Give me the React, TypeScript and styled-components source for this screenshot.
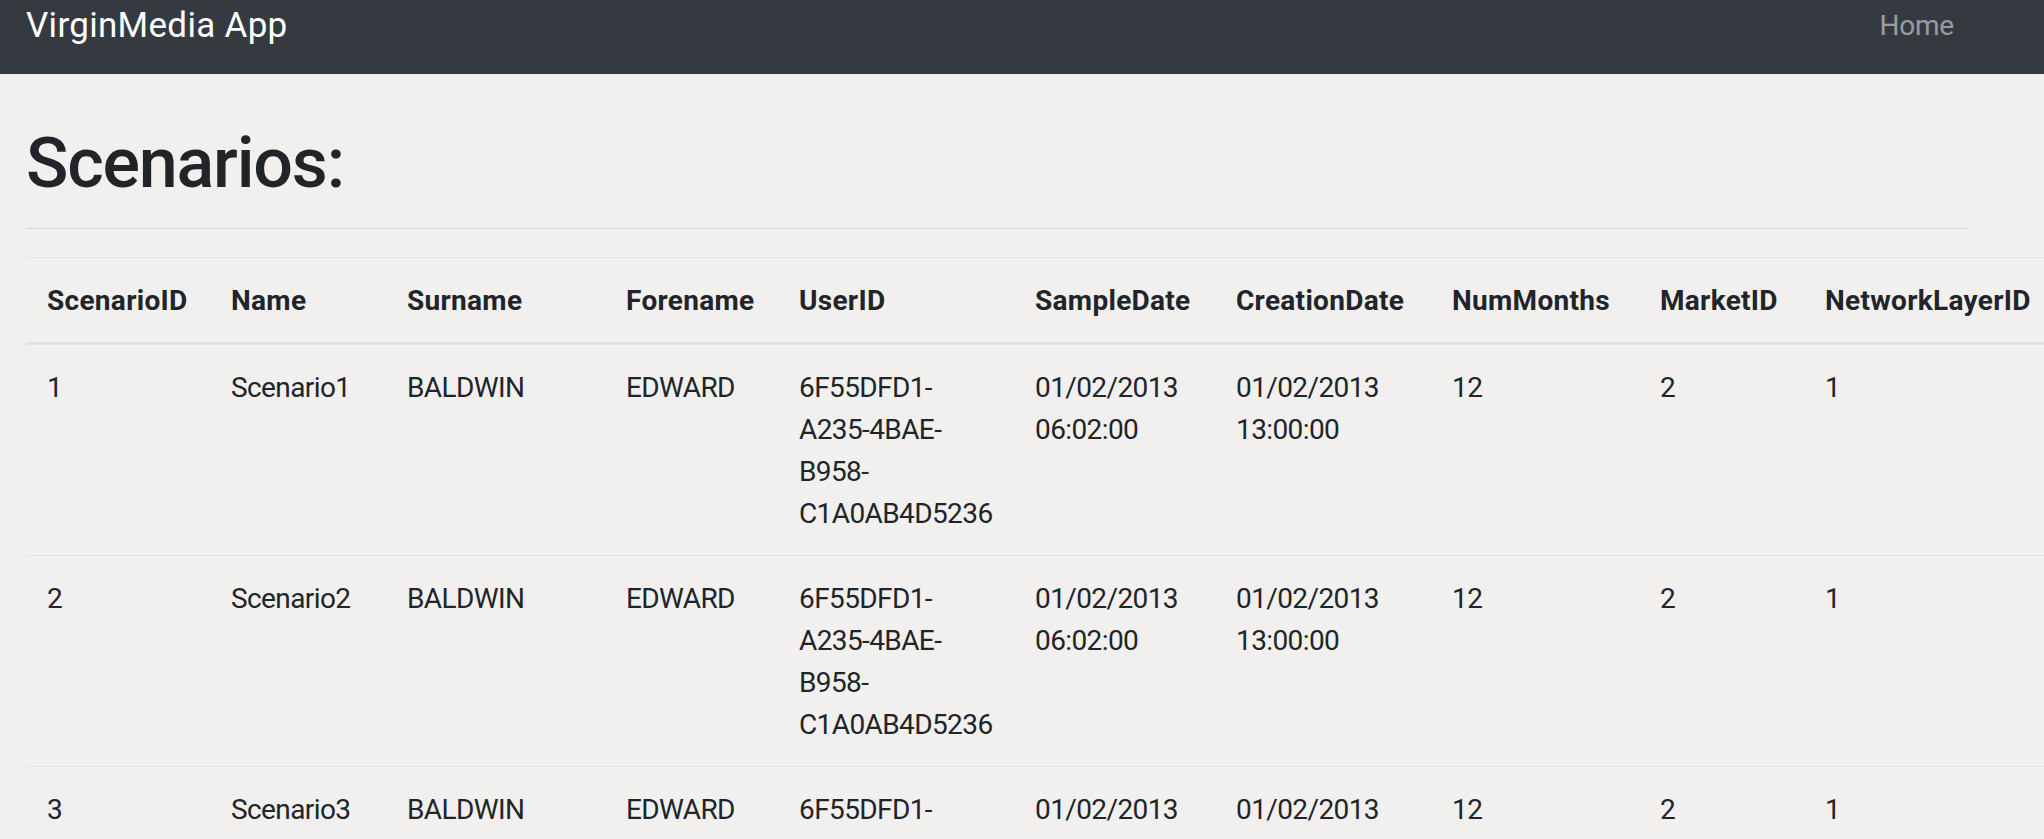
import React from "react";
import styled, { createGlobalStyle } from "styled-components";

const GlobalStyle = createGlobalStyle`
  html, body {
    margin: 0;
    padding: 0;
    background: #f1f0ee;
  }
  body {
    font-family: "Roboto", "Liberation Sans", sans-serif;
    color: #212529;
  }
  * { box-sizing: border-box; }
`;

const Page = styled.div`
  width: 2044px;
  min-height: 839px;
  overflow: hidden;
  background: #f1f0ee;
`;

const NavBar = styled.nav`
  height: 74px;
  background: #343a40;
  display: flex;
  align-items: flex-start;
  justify-content: space-between;
  padding: 0 76px 0 26px;
`;

const Brand = styled.a`
  font-size: 35px;
  line-height: 52px;
  color: #ffffff;
  text-decoration: none;
  letter-spacing: 0.3px;
`;

const NavLink = styled.a`
  margin-top: 5px;
  padding: 0 14px;
  font-size: 28px;
  line-height: 42px;
  color: rgba(255, 255, 255, 0.5);
  text-decoration: none;
  letter-spacing: -0.2px;
`;

const Container = styled.main`
  width: 1994px;
  padding: 47px 26px 0;
`;

const Title = styled.h1`
  margin: 0;
  font-size: 70px;
  line-height: 84px;
  font-weight: 500;
  letter-spacing: -1.2px;
  color: #212529;
`;

const Divider = styled.hr`
  margin: 23px 0 28px;
  border: 0;
  border-top: 1px solid rgba(0, 0, 0, 0.1);
`;

const Table = styled.table`
  border-collapse: collapse;
  table-layout: fixed;
  width: 2032px;
  font-size: 28px;
  line-height: 42px;
`;

const HeadCell = styled.th<{ $width: number }>`
  width: ${(p) => p.$width}px;
  padding: 22px 21px 20px;
  text-align: left;
  vertical-align: bottom;
  font-weight: 700;
  letter-spacing: 0.3px;
  white-space: nowrap;
  border-top: 1px solid #dee2e6;
  border-bottom: 3px solid #dee2e6;
`;

const Cell = styled.td`
  padding: 22px 21px 20px;
  vertical-align: top;
  font-weight: 400;
  letter-spacing: -0.6px;
  border-top: 1px solid #dee2e6;
  overflow-wrap: normal;
`;

const columns: { label: string; width: number }[] = [
  { label: "ScenarioID", width: 184 },
  { label: "Name", width: 176 },
  { label: "Surname", width: 219 },
  { label: "Forename", width: 173 },
  { label: "UserID", width: 236 },
  { label: "SampleDate", width: 201 },
  { label: "CreationDate", width: 216 },
  { label: "NumMonths", width: 208 },
  { label: "MarketID", width: 165 },
  { label: "NetworkLayerID", width: 254 },
];

type Scenario = {
  id: number;
  name: string;
  surname: string;
  forename: string;
  userId: string;
  sampleDate: string;
  creationDate: string;
  numMonths: number;
  marketId: number;
  networkLayerId: number;
};

const scenarios: Scenario[] = [1, 2, 3].map((n) => ({
  id: n,
  name: `Scenario${n}`,
  surname: "BALDWIN",
  forename: "EDWARD",
  userId: "6F55DFD1-A235-4BAE-B958-C1A0AB4D5236",
  sampleDate: "01/02/2013 06:02:00",
  creationDate: "01/02/2013 13:00:00",
  numMonths: 12,
  marketId: 2,
  networkLayerId: 1,
}));

const Guid = ({ value }: { value: string }) => {
  const parts = value.split("-");
  const lines = [`${parts[0]}-`, `${parts[1]}-${parts[2]}-`, `${parts[3]}-`, parts[4]];
  return (
    <>
      {lines.map((l, i) => (
        <React.Fragment key={i}>
          {l}
          {i < lines.length - 1 && <br />}
        </React.Fragment>
      ))}
    </>
  );
};

const DateTime = ({ value }: { value: string }) => {
  const [d, t] = value.split(" ");
  return (
    <>
      {d}
      <br />
      {t}
    </>
  );
};

export default function App() {
  return (
    <Page>
      <GlobalStyle />
      <NavBar>
        <Brand href="#">VirginMedia App</Brand>
        <NavLink href="#">Home</NavLink>
      </NavBar>
      <Container>
        <Title>Scenarios:</Title>
        <Divider />
        <Table>
          <thead>
            <tr>
              {columns.map((c) => (
                <HeadCell key={c.label} $width={c.width}>
                  {c.label}
                </HeadCell>
              ))}
            </tr>
          </thead>
          <tbody>
            {scenarios.map((s) => (
              <tr key={s.id}>
                <Cell>{s.id}</Cell>
                <Cell>{s.name}</Cell>
                <Cell>{s.surname}</Cell>
                <Cell>{s.forename}</Cell>
                <Cell>
                  <Guid value={s.userId} />
                </Cell>
                <Cell>
                  <DateTime value={s.sampleDate} />
                </Cell>
                <Cell>
                  <DateTime value={s.creationDate} />
                </Cell>
                <Cell>{s.numMonths}</Cell>
                <Cell>{s.marketId}</Cell>
                <Cell>{s.networkLayerId}</Cell>
              </tr>
            ))}
          </tbody>
        </Table>
      </Container>
    </Page>
  );
}
